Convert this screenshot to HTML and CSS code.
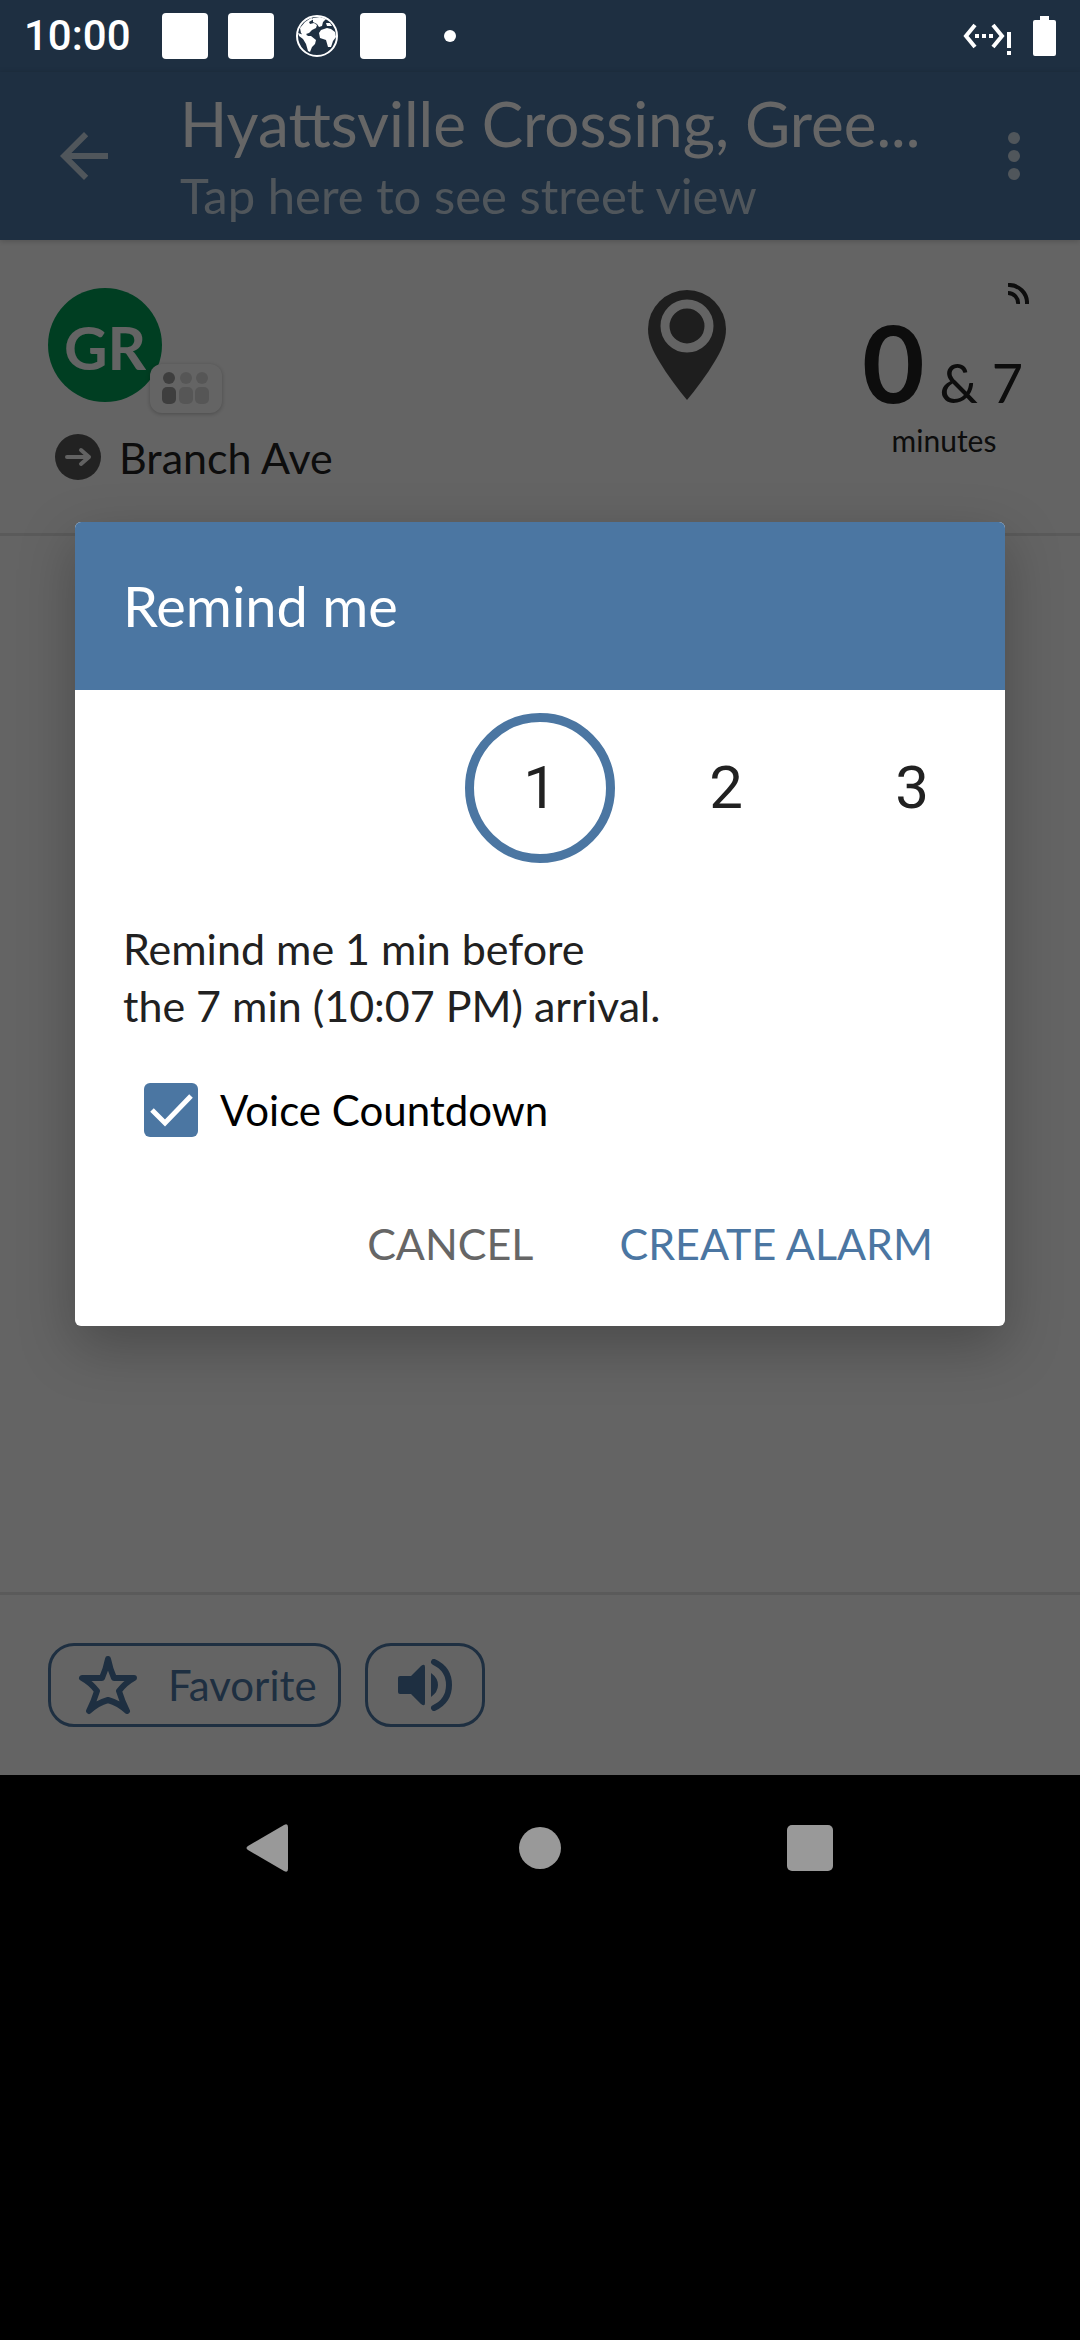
FILE: index.html
```html
<!DOCTYPE html>
<html lang="en">
<head>
<meta charset="utf-8">
<meta name="viewport" content="width=device-width, initial-scale=1">
<title>Hyattsville Crossing</title>
<link rel="stylesheet" href="styles.css">
</head>
<body>
<div class="status">
  <span class="clock">10:00</span>
  <span class="notice"></span>
  <span class="notice"></span>
  <svg class="globe" viewBox="0 0 42 42" aria-hidden="true">
    <circle cx="21" cy="21" r="20" fill="none" stroke="#fff" stroke-width="2"/>
    <path fill="#fff" d="M4 13l5-6 6-4 3 1-5 3 1 2 4-1 3 2-1 3-4 2-3 3-3 1 2 2-5-1-2-2zM17 3l7-1 6 2-3 3-1 4-3 1-2-3-4-2zM2 18l6 2 3 1 4 0 5 4-1 4-3 3-2 5-2-1-2-7-3-5-4-3zM25 15l6-2 4 1 4 3 1 5-3 4-2 6-3 0-2-7-6-2-1-5zM30 8l4 0 2 3-5 0z"/>
  </svg>
  <span class="notice"></span>
  <span class="more-dot"></span>
  <svg class="net" viewBox="0 0 50 42" aria-hidden="true">
    <path d="M12 10L3 21l9 11M30 10l9 11-9 11" fill="none" stroke="#fff" stroke-width="4"/>
    <path fill="#fff" d="M12 19h4v4h-4zM19 19h4v4h-4zM26 19h4v4h-4zM44 17h4v16h-4zM44 36h4v4h-4z"/>
  </svg>
  <svg class="battery" viewBox="0 0 23 40" aria-hidden="true">
    <path fill="#fff" d="M7 0h9v4h5a2 2 0 0 1 2 2v32a2 2 0 0 1-2 2H2a2 2 0 0 1-2-2V6a2 2 0 0 1 2-2h5z"/>
  </svg>
</div>

<div class="app">
  <header class="bar">
    <button class="icon-btn" aria-label="Back">
      <svg width="48" height="48" viewBox="0 0 16 16"><path fill="currentColor" d="M16 7H3.8l5.6-5.6L8 0 0 8l8 8 1.4-1.4L3.8 9H16z"/></svg>
    </button>
    <a class="heading" href="#street">
      <span class="title">Hyattsville Crossing, Gree...</span>
      <span class="subtitle">Tap here to see street view</span>
    </a>
    <button class="icon-btn" aria-label="More options">
      <svg width="12" height="48" viewBox="0 0 12 48"><g fill="currentColor"><circle cx="6" cy="6" r="6"/><circle cx="6" cy="24" r="6"/><circle cx="6" cy="42" r="6"/></g></svg>
    </button>
  </header>

  <main class="stop">
    <section class="arrival">
      <div class="route">
        <div class="line-badge">GR
          <span class="crowd">
            <svg width="48" height="33" viewBox="0 0 48 33"><g fill="#d7d7d7"><circle cx="24" cy="6" r="6"/><circle cx="40" cy="6" r="6"/><rect x="17" y="15" width="14" height="17" rx="5"/><rect x="33" y="15" width="14" height="17" rx="5"/></g><g fill="#9c9c9c"><circle cx="7" cy="6" r="6"/><rect x="0" y="15" width="14" height="17" rx="5"/></g></svg>
          </span>
        </div>
        <div class="destination">
          <svg width="47" height="47" viewBox="0 0 47 47"><circle cx="23" cy="23" r="23" fill="#555"/><path d="M12 23h22M26 16l8 7-8 7" fill="none" stroke="#f5f5f5" stroke-width="4" stroke-linecap="round" stroke-linejoin="round"/></svg>
          <span>Branch Ave</span>
        </div>
      </div>
      <svg class="pin" width="78" height="110" viewBox="0 0 78 110"><path fill="#4c4c4c" d="M39 0a39 39 0 0 1 39 39c0 12-5 22-11 32-9 15-19 28-28 39C30 99 20 86 11 71 5 61 0 51 0 39A39 39 0 0 1 39 0z"/><circle cx="39" cy="36" r="22" fill="none" stroke="#fafafa" stroke-width="9"/></svg>
      <div class="eta">
        <svg class="live" width="21" height="21" viewBox="0 0 21 21"><path d="M0 2a18 18 0 0 1 19 19M0 10a10 10 0 0 1 10 11" fill="none" stroke="#212121" stroke-width="4"/></svg>
        <div class="times"><strong>0</strong><span>&amp; 7</span></div>
        <div class="unit">minutes</div>
      </div>
    </section>
    <footer class="actions">
      <button class="pill">
        <svg width="60" height="60" viewBox="0 0 60 60"><path d="M30 4q2 10 6 19h20q-9 5-15 13 3 10 8 20-8-8-19-11-11 3-19 11 5-10 8-20Q13 28 4 23h20q4-9 6-19z" fill="none" stroke="currentColor" stroke-width="6" stroke-linejoin="round"/></svg>
        <span>Favorite</span>
      </button>
      <button class="pill sound" aria-label="Read aloud">
        <svg width="54" height="52" viewBox="0 0 54 52"><path fill="currentColor" d="M2 17h11L23 7q4-3 4 1v36q0 4-4 1L13 35H2q-2 0-2-2V19q0-2 2-2zM33 14q7 5 7 12t-7 12z"/><path d="M36 3q15 7 15 23T36 49" fill="none" stroke="currentColor" stroke-width="6" stroke-linecap="round"/></svg>
      </button>
    </footer>
  </main>

  <div class="scrim">
    <form class="dialog" role="dialog" aria-labelledby="dlg-title">
      <h2 class="dialog-title" id="dlg-title">Remind me</h2>
      <div class="picker" role="radiogroup" aria-label="Minutes before">
        <label class="choice first"><input type="radio" name="min" checked><span>1</span></label>
        <label class="choice"><input type="radio" name="min"><span>2</span></label>
        <label class="choice"><input type="radio" name="min"><span>3</span></label>
      </div>
      <p class="message">Remind me 1 min before<br>the 7 min (10:07 PM) arrival.</p>
      <label class="voice">
        <span class="tick"><input type="checkbox" checked><svg width="54" height="54" viewBox="0 0 54 54"><path d="M8 27l13 13 26-27" fill="none" stroke="#fff" stroke-width="5"/></svg></span>
        <span>Voice Countdown</span>
      </label>
      <div class="dialog-actions">
        <button type="button" class="text-btn muted">CANCEL</button>
        <button type="button" class="text-btn">CREATE ALARM</button>
      </div>
    </form>
  </div>
</div>

<nav class="system-nav" aria-label="System">
  <button aria-label="Back"><svg width="48" height="48" viewBox="0 0 48 48"><path fill="#999" d="M2 22L38 1q4-2 4 2v42q0 4-4 2L2 26q-3-2 0-4z"/></svg></button>
  <button aria-label="Home"><svg width="48" height="48" viewBox="0 0 48 48"><circle cx="24" cy="24" r="21" fill="#999"/></svg></button>
  <button aria-label="Recent apps"><svg width="48" height="48" viewBox="0 0 48 48"><rect x="1" y="1" width="46" height="46" rx="5" fill="#999"/></svg></button>
</nav>
</body>
</html>
```
FILE: styles.css
```css
:root {
  --blue: #4b76a2;
  --ink: #212121;
  --surface: #fafafa;
}

* { box-sizing: border-box; }

body {
  margin: 0;
  min-height: 100vh;
  display: grid;
  grid-template-rows: auto 1fr auto;
  background: #000;
  color: var(--ink);
  font: 43px/57px Lato, "Noto Sans", sans-serif;
}

button {
  font: inherit;
  color: inherit;
  background: none;
  border: 0;
  padding: 0;
}

svg { display: block; flex: none; }

/* Status bar */
.status {
  display: flex;
  align-items: center;
  height: 72px;
  padding: 0 24px;
  background: #1e2f41;
  color: #fff;
}
.clock {
  width: 118px;
  margin-right: 20px;
  font: 500 42px/48px Roboto, sans-serif;
}
.notice {
  width: 46px;
  height: 46px;
  margin-right: 20px;
  border-radius: 4px;
  background: #fff;
}
.globe { width: 42px; height: 42px; margin: 0 22px 0 2px; }
.more-dot { width: 12px; height: 12px; margin-left: 18px; border-radius: 50%; background: #fff; }
.net { width: 50px; height: 42px; margin: 0 20px 0 auto; }
.battery { width: 23px; height: 40px; }

/* App window */
.app {
  position: relative;
  display: flex;
  flex-direction: column;
  background: var(--surface);
}
.bar {
  display: flex;
  align-items: center;
  height: 168px;
  padding: 0 60px;
  background: var(--blue);
  color: #c9d6e3;
  box-shadow: 0 1px 6px rgba(0, 0, 0, .2);
}
.heading {
  flex: 1;
  min-width: 0;
  padding: 4px 0 0 72px;
  color: inherit;
  text-decoration: none;
}
.heading span { display: block; white-space: nowrap; }
.title { font-size: 62px; line-height: 74px; color: #fff; }
.subtitle { font-size: 49px; line-height: 70px; }

.stop { flex: 1; display: flex; flex-direction: column; }

.arrival {
  display: flex;
  align-items: flex-start;
  min-height: 296px;
  padding: 43px 48px 0;
  border-bottom: 3px solid #e0e0e0;
}
.route { flex: 1; padding-top: 5px; }
.line-badge {
  position: relative;
  width: 114px;
  height: 114px;
  border-radius: 50%;
  background: #009b55;
  color: #fafafa;
  font-size: 60px;
  line-height: 118px;
  font-weight: 700;
  text-align: center;
}
.crowd {
  position: absolute;
  left: 102px;
  top: 76px;
  padding: 8px 12px;
  border-radius: 12px;
  background: var(--surface);
  box-shadow: 0 1px 4px rgba(0, 0, 0, .25);
}
.destination {
  display: flex;
  align-items: center;
  gap: 17px;
  padding: 27px 0 0 7px;
}
.pin { margin: 7px 130px 0 0; }
.eta { width: 176px; text-align: center; }
.live { margin: 0 3px 0 auto; }
.times {
  display: flex;
  align-items: baseline;
  justify-content: space-between;
  height: 118px;
  padding: 0 9px 0 6px;
  line-height: 114px;
}
.times strong { font-size: 108px; }
.times span { font-size: 54px; }
.unit { font-size: 30px; line-height: 36px; }

.actions {
  display: flex;
  gap: 24px;
  margin-top: auto;
  padding: 48px;
  border-top: 3px solid #e0e0e0;
  color: var(--blue);
}
.pill {
  display: flex;
  align-items: center;
  height: 84px;
  gap: 30px;
  padding: 0 21px 0 27px;
  border: 3px solid currentColor;
  border-radius: 26px;
  font-size: 42px;
}
.pill.sound { padding: 0 30px; }

/* Reminder dialog */
.scrim {
  position: absolute;
  inset: 0;
  display: flex;
  align-items: center;
  padding: 0 75px;
  background: rgba(0, 0, 0, .6);
}
.dialog {
  flex: 1;
  border-radius: 6px;
  background: #fff;
  overflow: hidden;
  box-shadow: 0 20px 56px rgba(0, 0, 0, .26);
}
.dialog-title {
  margin: 0;
  padding: 48px;
  background: var(--blue);
  color: #fff;
  font-size: 56px;
  line-height: 72px;
  font-weight: 400;
}
.picker {
  display: grid;
  grid-template-columns: repeat(5, 1fr);
  padding-top: 23px;
  font: 60px/150px Roboto, sans-serif;
}
.choice { display: grid; place-items: center; }
.choice > * { grid-area: 1 / 1; }
.choice.first { grid-column: 3; }
.choice input {
  appearance: none;
  width: 150px;
  height: 150px;
  margin: 0;
  border-radius: 50%;
}
.choice input:checked { border: 9px solid var(--blue); }
.message { margin: 0; padding: 57px 48px 0; }
.voice {
  display: flex;
  align-items: center;
  gap: 22px;
  padding: 48px 69px 0;
  color: #000;
  font-size: 42px;
}
.tick { display: grid; }
.tick > * { grid-area: 1 / 1; }
.tick input {
  appearance: none;
  width: 54px;
  height: 54px;
  margin: 0;
  border-radius: 6px;
  background: var(--blue);
}
.tick svg { pointer-events: none; z-index: 1; }
.dialog-actions {
  display: flex;
  justify-content: flex-end;
  gap: 86px;
  padding: 76px 72px 54px;
}
.text-btn { color: var(--blue); }
.text-btn.muted { color: #666; }

/* System navigation */
.system-nav {
  display: grid;
  grid-template-columns: repeat(3, 1fr);
  padding: 49px 12.5% 468px;
}
.system-nav button { display: grid; place-items: center; }
```
